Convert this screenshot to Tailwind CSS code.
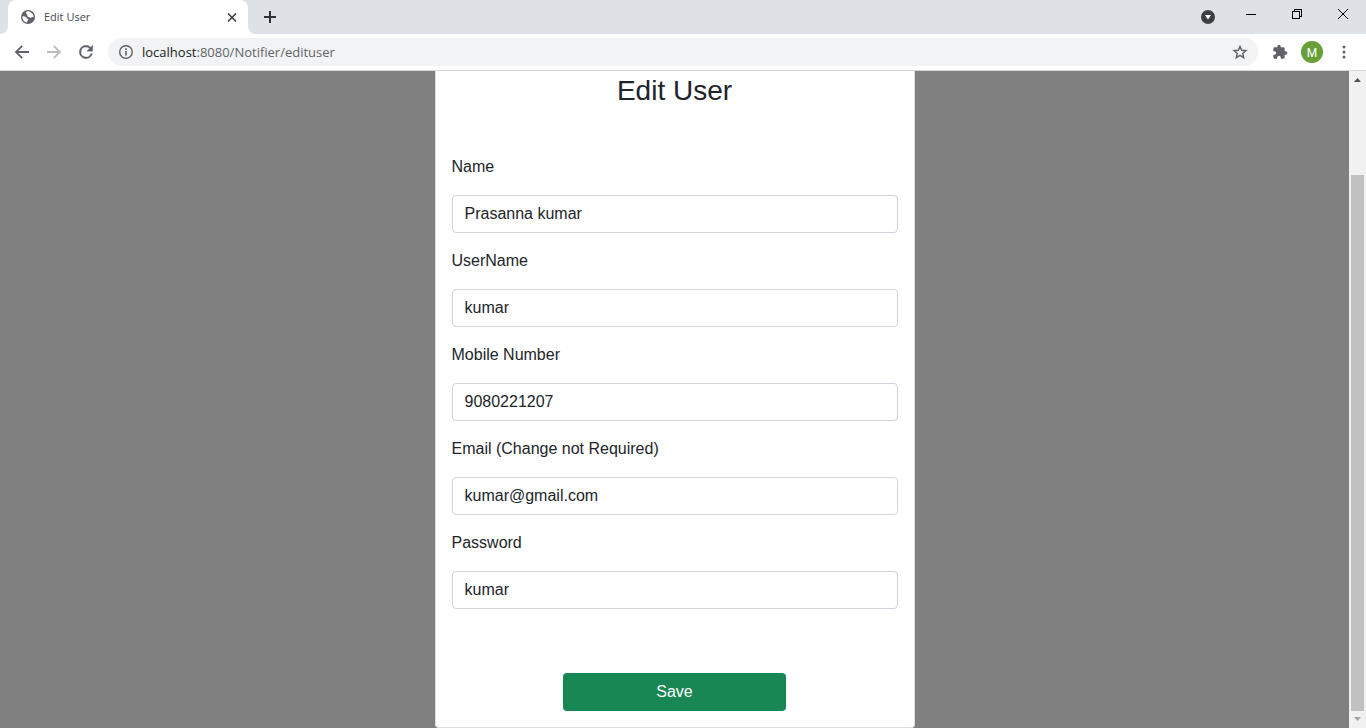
<!DOCTYPE html>
<html lang="en">
<head>
<meta charset="utf-8">
<meta name="viewport" content="width=device-width, initial-scale=1">
<title>Edit User</title>
<script src="https://cdn.jsdelivr.net/npm/@tailwindcss/browser@4"></script>
</head>
<body class="flex h-screen flex-col overflow-hidden bg-white font-['Liberation_Sans',Arial,sans-serif] text-[#212529]">

<header class="shrink-0 border-b border-[#d5d7da] font-['Open_Sans','Noto_Sans',sans-serif]">
  <!-- Tab strip -->
  <div class="flex h-[34px] bg-[#dee1e6]">
    <div class="w-2 bg-white"><div class="h-full rounded-br-lg bg-[#dee1e6]"></div></div>
    <div class="flex w-60 items-center rounded-t-lg bg-white pr-2 pl-3">
      <svg class="size-4 shrink-0" viewBox="0 0 16 16" aria-hidden="true">
        <circle cx="8" cy="8" r="7" fill="#5f6368"/>
        <path d="M8.300 2.300C6.800 2.200 5.500 3 5.200 4.200c.2.900 1.300.8 1.700 1.400.4.700-.1 1.400.5 2 .8.500 1.800.1 2.500.7.500.5 1.300.1 1.700-.5.500-.6 1.200-.6 2-.3C13.400 4.900 11.200 2.700 8.300 2.300Z" fill="#fff" transform="rotate(8 8 8)"/>
        <path d="M2.400 7.300c1.200-.2 2.500 0 3.400.7.700.5.600 1.300 1.400 1.600.9.300 1.300.8 1.100 1.500-.2.700-1.100.8-1.200 1.500v1C4.200 13.200 2.200 10.600 2.400 7.300Z" fill="#fff"/>
      </svg>
      <span class="ml-2 flex-1 text-[11px] text-[#45494d]">Edit User</span>
      <button type="button" aria-label="Close tab" class="grid size-4 place-items-center">
        <svg class="size-4" viewBox="0 0 16 16" fill="none" stroke="#3c4043" stroke-width="1.600"><path d="M4 4.500l8 8M12 4.500l-8 8"/></svg>
      </button>
    </div>
    <div class="w-2 bg-white"><div class="h-full rounded-bl-lg bg-[#dee1e6]"></div></div>
    <button type="button" aria-label="New tab" class="ml-1 grid w-5 place-items-center">
      <svg class="size-4" viewBox="0 0 16 16" fill="none" stroke="#2f3337" stroke-width="2"><path d="M8 2v12M2 8h12"/></svg>
    </button>
    <div class="ml-auto flex items-center">
      <button type="button" aria-label="Search tabs" class="mr-2 grid size-6 place-items-center">
        <svg class="size-4" viewBox="0 0 16 16"><circle cx="8" cy="8" r="7" fill="#3c4043"/><path d="M5 6h6l-3 4.500Z" fill="#fff"/></svg>
      </button>
      <button type="button" aria-label="Minimize" class="grid h-7 w-[46px] place-items-center self-start">
        <svg class="h-3 w-3" viewBox="0 0 12 12" shape-rendering="crispEdges"><path d="M1 6h10v1H1Z" fill="#000"/></svg>
      </button>
      <button type="button" aria-label="Restore" class="grid h-7 w-[46px] place-items-center self-start">
        <svg class="h-3 w-3" viewBox="0 0 12 12" fill="none" stroke="#000" shape-rendering="crispEdges"><path d="M1.500 3.500h7v7h-7ZM3.500 3.500v-2h7v7h-2"/></svg>
      </button>
      <button type="button" aria-label="Close window" class="grid h-7 w-[46px] place-items-center self-start">
        <svg class="h-3 w-3" viewBox="0 0 12 12" fill="none" stroke="#000"><path d="M1 1l10 10M11 1L1 11"/></svg>
      </button>
    </div>
  </div>
  <!-- Navigation toolbar -->
  <div class="flex h-9 items-center bg-white px-3">
    <button type="button" aria-label="Back" class="mr-3"><svg class="size-5" viewBox="0 0 20 20" fill="none" stroke="#5f6368" stroke-width="1.800"><path d="M17 10H4.500M10.200 3.800L4 10l6.200 6.200"/></svg></button>
    <button type="button" aria-label="Forward" class="mr-3"><svg class="size-5" viewBox="0 0 20 20" fill="none" stroke="#babcbe" stroke-width="1.800"><path d="M3 10h12.500M9.800 3.800L16 10l-6.200 6.200"/></svg></button>
    <button type="button" aria-label="Reload" class="mr-3"><svg class="size-5" viewBox="0 0 24 24" fill="#5f6368"><path d="M17.650 6.350A7.960 7.960 0 0 0 12 4a8 8 0 1 0 7.730 10h-2.080A6 6 0 1 1 12 6c1.660 0 3.140.69 4.220 1.780L13 11h7V4l-2.350 2.350Z" stroke="#5f6368" stroke-width=".5"/></svg></button>
    <div class="flex h-7 flex-1 items-center rounded-full bg-[#f1f3f4] px-2">
      <svg class="size-5 shrink-0" viewBox="0 0 20 20" aria-hidden="true"><circle cx="10" cy="10" r="6.300" fill="none" stroke="#5f6368" stroke-width="1.400"/><path d="M9.200 9h1.600v4.500H9.200ZM9.200 6.300h1.600v1.600H9.200Z" fill="#5f6368"/></svg>
      <a href="#" class="ml-1.5 flex-1 pt-0.5 text-[13px] text-[#5f6368]"><span class="text-[#202124]">localhost</span>:8080/Notifier/edituser</a>
      <button type="button" aria-label="Bookmark this page"><svg class="size-5" viewBox="0 0 20 20" fill="none" stroke="#5f6368" stroke-width="1.500"><path d="M10 4.500l1.700 3.800 4.200.4-3.150 2.800.92 4.100L10 13.400l-3.670 2.200.92-4.100L4.100 8.700l4.200-.4Z"/></svg></button>
    </div>
    <button type="button" aria-label="Extensions" class="ml-3"><svg class="size-5" viewBox="0 0 30 30" fill="#5f6368"><path d="M23.500 14H22v-4a2 2 0 0 0-2-2h-4V6.500a2.500 2.500 0 0 0-5 0V8H7a2 2 0 0 0-2 2v3.800h1.500a2.700 2.700 0 0 1 0 5.400H5V23a2 2 0 0 0 2 2h3.800v-1.500a2.700 2.700 0 0 1 5.400 0V25H20a2 2 0 0 0 2-2v-4h1.500a2.500 2.500 0 0 0 0-5Z"/></svg></button>
    <button type="button" aria-label="Profile" class="ml-[11px] grid size-[22px] place-items-center rounded-full bg-[#689f38] pt-px font-['Roboto',sans-serif] text-[12px] text-white">M</button>
    <button type="button" aria-label="Menu" class="ml-[11px]"><svg class="size-5" viewBox="0 0 20 20" fill="#5f6368"><circle cx="10" cy="5" r="1.500"/><circle cx="10" cy="10" r="1.500"/><circle cx="10" cy="15" r="1.500"/></svg></button>
  </div>
</header>

<div class="flex min-h-0 flex-1">
  <main class="flex flex-1 items-end justify-center bg-[#808080]">
    <form class="flex w-full max-w-[480px] flex-col rounded-b border border-t-0 border-[#dfdfdf] bg-white px-4 pb-4" onsubmit="return false">
      <h1 class="mb-11 text-center text-[28px] leading-10">Edit User</h1>
      <div class="flex flex-col gap-4">
        <div class="flex flex-col gap-4">
          <label for="name">Name</label>
          <input id="name" type="text" value="Prasanna kumar" class="h-[38px] w-full rounded border border-[#ced4da] bg-white px-3">
        </div>
        <div class="flex flex-col gap-4">
          <label for="username">UserName</label>
          <input id="username" type="text" value="kumar" class="h-[38px] w-full rounded border border-[#ced4da] bg-white px-3">
        </div>
        <div class="flex flex-col gap-4">
          <label for="mobile">Mobile Number</label>
          <input id="mobile" type="text" value="9080221207" class="h-[38px] w-full rounded border border-[#ced4da] bg-white px-3">
        </div>
        <div class="flex flex-col gap-4">
          <label for="email">Email (Change not Required)</label>
          <input id="email" type="text" value="kumar@gmail.com" class="h-[38px] w-full rounded border border-[#ced4da] bg-white px-3">
        </div>
        <div class="flex flex-col gap-4">
          <label for="password">Password</label>
          <input id="password" type="text" value="kumar" class="h-[38px] w-full rounded border border-[#ced4da] bg-white px-3">
        </div>
      </div>
      <button type="submit" class="mt-16 h-[38px] w-1/2 self-center rounded bg-[#198754] text-white">Save</button>
    </form>
  </main>
  <!-- Page scrollbar -->
  <div class="flex w-[17px] flex-col items-center bg-[#f1f1f1]" aria-hidden="true">
    <svg class="h-[17px] w-[17px] shrink-0" viewBox="0 0 17 17"><path d="M5 11l3.500-4L12 11Z" fill="#505050"/></svg>
    <div class="flex w-full flex-1 flex-col px-0.5">
      <div class="flex-[87]"></div>
      <div class="flex-[536] bg-[#c1c1c1]"></div>
    </div>
    <svg class="h-[17px] w-[17px] shrink-0" viewBox="0 0 17 17"><path d="M5 6l3.500 4L12 6Z" fill="#a3a3a3"/></svg>
  </div>
</div>
</body>
</html>
